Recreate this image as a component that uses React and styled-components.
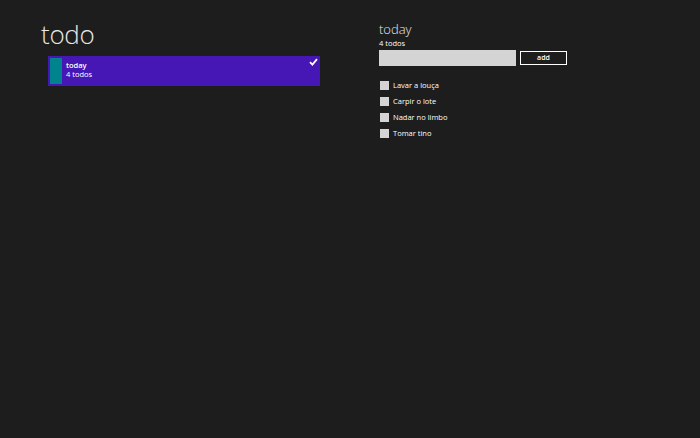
import React from 'react'
import styled, { createGlobalStyle } from 'styled-components'

const GlobalStyle = createGlobalStyle`
  html, body {
    margin: 0;
    padding: 0;
    background: #1d1d1d;
  }
  body {
    font-family: 'Open Sans', 'Noto Sans', sans-serif;
    color: #ffffff;
  }
`
const Page = styled.div`
  display: flex;
  width: 700px;
  height: 438px;
  background: #1d1d1d;
  box-sizing: border-box;
`
const Left = styled.div`
  display: flex;
  flex-direction: column;
  width: 379px;
  padding: 18px 0 0 41px;
  box-sizing: border-box;
`
const Title = styled.h1`
  margin: 0;
  font-size: 26px;
  font-weight: 300;
  line-height: 32px;
  color: #e8e8e8;
  letter-spacing: -0.3px;
`
const List = styled.div`
  display: flex;
  flex-direction: column;
  margin: 6px 0 0 7px;
`
const ListCard = styled.div`
  position: relative;
  display: flex;
  align-items: stretch;
  gap: 4px;
  width: 272px;
  height: 30px;
  padding: 2px;
  box-sizing: border-box;
  background: ${p => (p.selected ? '#4617b4' : '#2d2d2d')};
`
const Swatch = styled.div`
  width: 12px;
  background: ${p => p.color};
`
const CardText = styled.div`
  display: flex;
  flex-direction: column;
  padding-top: 3px;
  font-size: 7.5px;
  line-height: 9px;
  color: #ffffff;
`
const CardName = styled.span`
  font-weight: 600;
`
const Check = styled.svg`
  position: absolute;
  top: 2px;
  right: 2px;
`
const Right = styled.div`
  display: flex;
  flex-direction: column;
  padding: 21px 0 0 0;
`
const ListTitle = styled.h2`
  margin: 0;
  font-size: 13px;
  font-weight: 300;
  line-height: 17px;
  color: #e8e8e8;
`
const Count = styled.div`
  font-size: 7.5px;
  line-height: 10px;
  color: #ffffff;
`
const AddRow = styled.div`
  display: flex;
  align-items: center;
  gap: 4px;
  margin-top: 2px;
`
const Input = styled.input`
  width: 137px;
  height: 16px;
  padding: 0 4px;
  box-sizing: border-box;
  border: none;
  outline: none;
  background: #d4d4d4;
  font-size: 8px;
`
const AddButton = styled.button`
  width: 47px;
  height: 14px;
  padding: 0;
  box-sizing: border-box;
  border: 1.5px solid #ffffff;
  background: transparent;
  color: #ffffff;
  font-family: 'Open Sans', 'Noto Sans', sans-serif;
  font-size: 7px;
  font-weight: 600;
  line-height: 10px;
`
const Todos = styled.div`
  display: flex;
  flex-direction: column;
  gap: 7px;
  margin-top: 15px;
  padding-left: 1px;
`
const TodoRow = styled.label`
  display: flex;
  align-items: center;
  gap: 4px;
  font-size: 7.5px;
  line-height: 9px;
  color: #ffffff;
`
const Box = styled.span`
  width: 9px;
  height: 9px;
  background: #d4d4d4;
`

const todos = ['Lavar a louça', 'Carpir o lote', 'Nadar no limbo', 'Tomar tino']

const App = () => {
  return (
    <Page>
      <GlobalStyle />
      <Left>
        <Title>todo</Title>
        <List>
          <ListCard selected>
            <Swatch color='#00838c' />
            <CardText>
              <CardName>today</CardName>
              <span>4 todos</span>
            </CardText>
            <Check width='9' height='8' viewBox='0 0 9 8'>
              <path d='M1 4.2 L3.4 6.6 L8 1.2' stroke='#ffffff' strokeWidth='1.8' fill='none' />
            </Check>
          </ListCard>
        </List>
      </Left>
      <Right>
        <ListTitle>today</ListTitle>
        <Count>4 todos</Count>
        <AddRow>
          <Input />
          <AddButton>add</AddButton>
        </AddRow>
        <Todos>
          {todos.map(t => (
            <TodoRow key={t}>
              <Box />
              {t}
            </TodoRow>
          ))}
        </Todos>
      </Right>
    </Page>
  )
}

export default App
